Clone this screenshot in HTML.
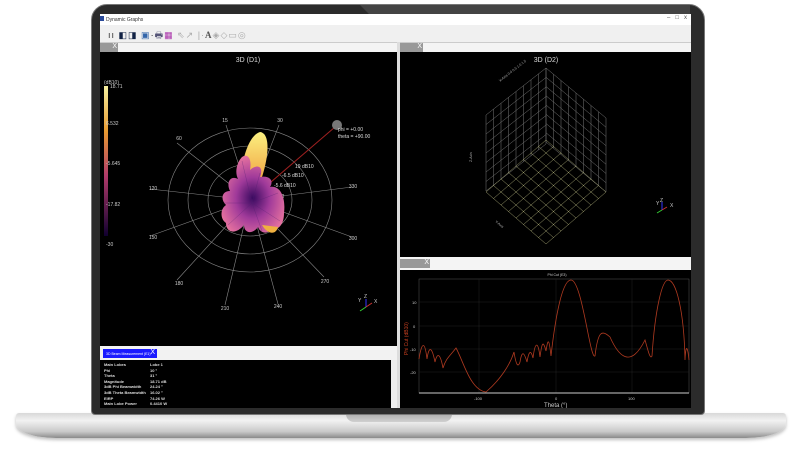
<!DOCTYPE html>
<html><head><meta charset="utf-8"><style>
*{margin:0;padding:0;box-sizing:border-box}
body{width:800px;height:450px;background:#fff;position:relative;overflow:hidden;font-family:"Liberation Sans",sans-serif}
.a{position:absolute}
.t{font-size:4px;color:#ddd}
</style></head><body>
<!-- base -->
<div class="a" style="left:16px;top:413px;width:770px;height:25px;border-radius:3px 3px 40px 40px/3px 3px 14px 14px;background:linear-gradient(#d8d8d8,#f2f2f2 30%,#c8c8c8 75%,#8a8a8a);box-shadow:0 2px 3px rgba(0,0,0,.25)"></div>
<div class="a" style="left:346px;top:413px;width:106px;height:9px;border-radius:0 0 8px 8px;background:linear-gradient(#a8a8a8,#d0d0d0)"></div>
<!-- bezel -->
<div class="a" style="left:91px;top:4px;width:614px;height:411px;border-radius:16px 16px 4px 4px;background:#2b2b2b;border:1px solid #777"></div>
<div class="a" style="left:360px;top:5px;width:330px;height:10px;background:#444;clip-path:polygon(0 0,100% 0,100% 100%,3% 100%)"></div>
<!-- screen -->
<div class="a" style="left:100px;top:14px;width:591px;height:394px;background:#000;overflow:hidden">
 <div class="a" style="left:0;top:0;width:591px;height:11px;background:#fff;font-size:5px;color:#333;padding:3px 0 0 6px">Dynamic Graphs<span style="position:absolute;left:0;top:2px;width:4px;height:5px;background:#2a4a9a"></span><span style="position:absolute;right:4px;top:1px;font-size:6px;color:#555">–&nbsp;&nbsp;&nbsp;□&nbsp;&nbsp;&nbsp;x</span></div>
 <div class="a" style="left:0;top:11px;width:591px;height:17px;background:#f0f0f0;font-size:9px;color:#333;padding:3px 0 0 8px;letter-spacing:1px">ıı <span style="color:#124">◧◨</span> <span style="color:#36a">▣</span>·<span style="color:#557">🖶</span><span style="color:#a3a">▦</span> <span style="color:#aaa">⇖↗</span> <span style="color:#aaa">|·</span><b style="font-family:'Liberation Serif';color:#555">A</b><span style="color:#aaa">◈◇▭◎</span></div>
 <div class="a" style="left:0;top:28px;width:591px;height:10px;background:#f4f4f4;border-top:1px solid #ccc"></div>
 <div class="a" style="left:0;top:29px;width:18px;height:9px;background:#999;font-size:7px;color:#fff;text-align:right;padding-right:1px">X</div>
 <div class="a" style="left:299px;top:29px;width:24px;height:9px;background:#999;font-size:7px;color:#fff;text-align:right;padding-right:1px">X</div>
 <div class="a" style="left:297px;top:28px;width:3px;height:366px;background:#ddd"></div>
 <!-- left plot -->
 <svg class="a" style="left:0;top:38px" width="297" height="294" viewBox="0 0 297 294">
  <defs><linearGradient id="cb" x1="0" y1="0" x2="0" y2="1"><stop offset="0" stop-color="#f6f0a0"/><stop offset=".3" stop-color="#e89a30"/><stop offset=".6" stop-color="#b03a6a"/><stop offset="1" stop-color="#100030"/></linearGradient>
  <radialGradient id="lb" cx=".5" cy=".55" r=".6"><stop offset="0" stop-color="#3a0a60"/><stop offset=".45" stop-color="#a03a9a"/><stop offset="1" stop-color="#f07aa0"/></radialGradient>
  <linearGradient id="ml" x1="0" y1="0" x2="0" y2="1"><stop offset="0" stop-color="#fbf080"/><stop offset="1" stop-color="#f0a040"/></linearGradient></defs>
  <text x="148" y="10" fill="#ddd" font-size="7" text-anchor="middle">3D (D1)</text>
  <rect x="4" y="34" width="4" height="150" fill="url(#cb)"/>
  <g fill="#ccc" font-size="5"><text x="4" y="32">(dB10)</text><text x="10" y="36">18.71</text><text x="6" y="73">6.532</text><text x="6" y="113">-5.645</text><text x="6" y="154">-17.82</text><text x="6" y="194">-30</text></g>
  <g transform="translate(2,23)">
  <g fill="none" stroke="#888" stroke-width=".6">
   <ellipse cx="148" cy="125" rx="82" ry="72"/><ellipse cx="148" cy="125" rx="62" ry="54"/><ellipse cx="148" cy="125" rx="42" ry="36"/><ellipse cx="148" cy="125" rx="22" ry="18"/>
   <path d="M148 125L124 50M148 125L177 50M148 125L75 68M148 125L48 114M148 125L250 112M148 125L48 161M148 125L250 162M148 125L75 205M148 125L222 202M148 125L123 230M148 125L176 229"/>
  </g>
  <g fill="#ccc" font-size="5" text-anchor="middle"><text x="123" y="47">15</text><text x="178" y="47">30</text><text x="77" y="65">60</text><text x="51" y="115">120</text><text x="251" y="113">330</text><text x="51" y="164">150</text><text x="251" y="165">300</text><text x="77" y="210">180</text><text x="223" y="208">270</text><text x="123" y="235">210</text><text x="176" y="233">240</text></g>
  <path d="M148 125L233 52" stroke="#a02020" stroke-width="1"/>
  <circle cx="235" cy="50" r="5" fill="#777"/>
  <g fill="#ddd" font-size="5"><text x="236" y="56">phi = +0.00</text><text x="236" y="63">theta = +90.00</text><text x="193" y="93">19 dB10</text><text x="180" y="102">-6.5 dB10</text><text x="172" y="112">-5.6 dB10</text><text x="162" y="123">-18 dB10</text><text x="150" y="132">-30 dB10</text></g>
  <path d="M138 108C140 80 148 60 158 57C168 58 168 80 158 108Z" fill="url(#ml)"/>
  <path d="M140 82C146 78 150 84 148 95C156 88 162 92 158 102C168 100 172 106 168 112C178 110 184 122 182 138C182 150 176 156 168 154C166 160 158 158 156 152C150 160 142 158 142 150C134 160 124 158 124 148C118 144 118 134 124 130C118 124 120 116 128 116C124 108 128 100 136 104C132 96 136 86 140 82Z" fill="url(#lb)"/>
  <path d="M160 150C166 160 174 160 176 152Z" fill="#f0b040"/>
  <g stroke="#502070" stroke-width=".4" opacity=".6"><path d="M150 128L140 86M150 128L158 98M150 128L176 118M150 128L178 146M150 128L126 150M150 128L122 128M150 128L160 156"/></g>
  </g>
  <g stroke-width="1"><path d="M266 255V247" stroke="#33f"/><path d="M266 255L260 259" stroke="#3c3"/><path d="M266 255L272 251" stroke="#c33"/></g>
  <g fill="#ccc" font-size="5"><text x="258" y="250">Y</text><text x="264" y="246">Z</text><text x="274" y="251">X</text></g>
 </svg>
 <!-- bottom left -->
 <div class="a" style="left:0;top:332px;width:297px;height:14px;background:#f2f2f2"></div>
 <div class="a" style="left:3px;top:335px;width:54px;height:9px;background:#1a1aff;font-size:3.5px;color:#fff;padding:3px 0 0 3px">3D Beam Measurement (E1)<span style="position:absolute;right:2px;top:0;font-size:7px">X</span></div>
 <div class="a" style="left:291px;top:346px;width:6px;height:48px;background:#eee"></div>
 <div class="a t" style="left:4px;top:348px;line-height:5.6px;font-weight:bold"><div>Main Lobes</div><div>Phi</div><div>Theta</div><div>Magnitude</div><div>3dB Phi Beamwidth</div><div>3dB Theta Beamwidth</div><div>EIRP</div><div>Main Lobe Power</div></div>
 <div class="a t" style="left:50px;top:348px;line-height:5.6px;font-weight:bold"><div>Lobe 1</div><div>10 °</div><div>31 °</div><div>18.71 dB</div><div>24.24 °</div><div>16.02 °</div><div>74.26 W</div><div>0.4410 W</div></div>
 <!-- right top -->
 <svg class="a" style="left:300px;top:38px" width="291" height="205" viewBox="0 0 291 205">
  <text x="146" y="10" fill="#ddd" font-size="7" text-anchor="middle">3D (D2)</text>
  <g fill="none" stroke-width=".5">
   <path transform="matrix(7.5,-5.875,0,9.5,86,63)" vector-effect="non-scaling-stroke" stroke="#777" d="M0 0V8M1 0V8M2 0V8M3 0V8M4 0V8M5 0V8M6 0V8M7 0V8M8 0V8M0 0H8M0 1H8M0 2H8M0 3H8M0 4H8M0 5H8M0 6H8M0 7H8M0 8H8"/>
   <path transform="matrix(7.5,6.25,0,9.25,146,16)" vector-effect="non-scaling-stroke" stroke="#777" d="M0 0V8M1 0V8M2 0V8M3 0V8M4 0V8M5 0V8M6 0V8M7 0V8M8 0V8M0 0H8M0 1H8M0 2H8M0 3H8M0 4H8M0 5H8M0 6H8M0 7H8M0 8H8"/>
   <path transform="matrix(7.5,6.5,-7.5,6.5,146,88)" vector-effect="non-scaling-stroke" stroke="#a0a070" d="M0 0V8M1 0V8M2 0V8M3 0V8M4 0V8M5 0V8M6 0V8M7 0V8M8 0V8M0 0H8M0 1H8M0 2H8M0 3H8M0 4H8M0 5H8M0 6H8M0 7H8M0 8H8"/>
  </g>
  <g fill="#aaa" font-size="3.5"><text x="72" y="110" transform="rotate(-90 72 110)">Z-Axis</text><text x="100" y="30" transform="rotate(-38 100 30)">X-Axis  0.0 0.5 1.0 1.5</text><text x="95" y="170" transform="rotate(40 95 170)">Y-Axis</text></g>
  <g stroke-width="1"><path d="M262 158V150" stroke="#33f"/><path d="M262 158L257 161" stroke="#3c3"/><path d="M262 158L267 155" stroke="#c33"/></g>
  <g fill="#ccc" font-size="5"><text x="256" y="153">Y</text><text x="260" y="150">Z</text><text x="270" y="155">X</text></g>
 </svg>
 <div class="a" style="left:300px;top:243px;width:291px;height:13px;background:#f4f4f4"></div>
 <div class="a" style="left:300px;top:245px;width:30px;height:9px;background:#999;font-size:7px;color:#fff;text-align:right;padding-right:1px">X</div>
 <!-- phi cut -->
 <svg class="a" style="left:300px;top:256px" width="291" height="138" viewBox="0 0 291 138">
  <text x="157" y="6" fill="#ccc" font-size="3.5" text-anchor="middle">Phi Cut (E3)</text>
  <rect x="19" y="9" width="270" height="114" fill="none" stroke="#555" stroke-width=".5"/>
  <g stroke="#222" stroke-width=".5"><path d="M19 32H289M19 56H289M19 79H289M19 102H289M79 9V123M156 9V123M232 9V123"/></g>
  <path d="M19 123H289" stroke="#ccc" stroke-width="1"/>
  <g fill="#ccc" font-size="4"><text x="12" y="34">10</text><text x="13" y="58">0</text><text x="10" y="81">-10</text><text x="10" y="104">-20</text><text x="74" y="130">-100</text><text x="155" y="130">0</text><text x="228" y="130">100</text><text x="144" y="137" font-size="6">Theta (°)</text></g>
  <text x="8" y="85" fill="#c84020" font-size="5" transform="rotate(-90 8 85)">Phi Cut (dB10)</text>
  <path d="M19 89C22 70 25 72 27 89C29 75 32 77 35 92C37 83 40 82 43 98C46 88 50 86 56 78C63 90 70 120 86 122C100 110 110 95 114 82C116 95 118 98 120 92C122 80 124 82 127 92C129 80 131 80 133 88C135 72 138 70 140 87C142 72 143 70 146 81C148 68 149 68 151 86C153 68 160 10 171 10C182 10 190 90 195 86C198 60 202 60 210 67C218 85 230 100 245 70C248 80 250 90 252 86C255 40 262 10 268 10C276 10 284 40 285 90C286 70 288 80 289 90" fill="none" stroke="#b03a20" stroke-width=".8"/>
 </svg>
</div>
</body></html>
